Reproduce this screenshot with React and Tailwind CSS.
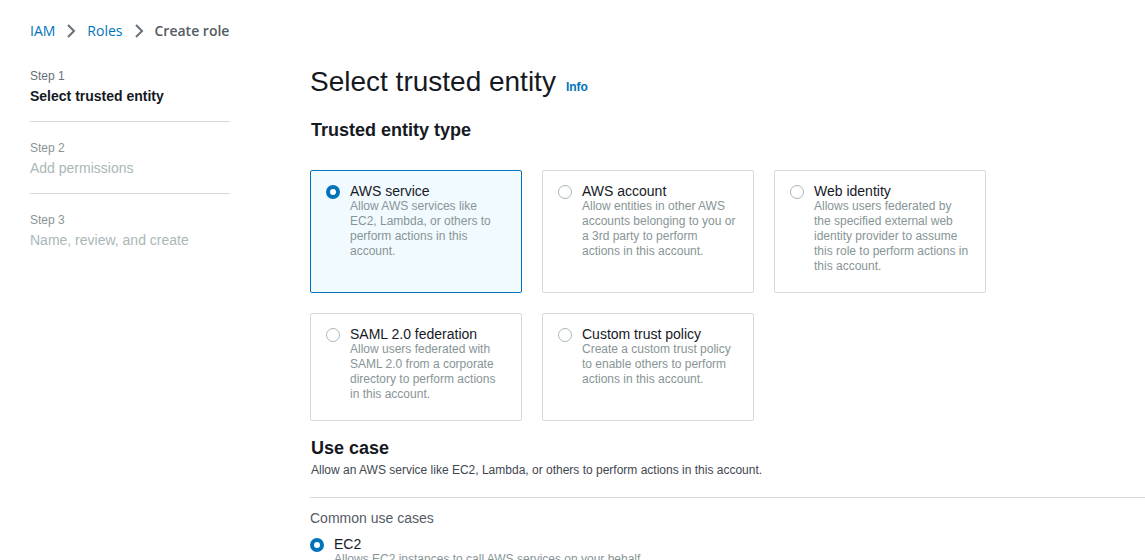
import React from "react";

function Chevron() {
  return (
    <svg width="12" height="16" viewBox="0 0 12 16" className="mx-[10px]">
      <path d="M3 2 L9 8 L3 14" fill="none" stroke="#687078" strokeWidth="2" />
    </svg>
  );
}

function Radio({ checked }) {
  return checked ? (
    <span className="mt-[1px] box-border block h-[14px] w-[14px] shrink-0 rounded-full border-[4px] border-[#0073bb] bg-white" />
  ) : (
    <span className="mt-[1px] box-border block h-[14px] w-[14px] shrink-0 rounded-full border border-[#aab7b8] bg-white" />
  );
}

function Card({ title, desc, selected }) {
  return (
    <div
      className={
        selected
          ? "box-border flex w-[212px] gap-[10px] rounded-[2px] border border-[#0073bb] bg-[#f1faff] pl-[15px] pt-[12px] pb-[18px]"
          : "box-border flex w-[212px] gap-[10px] rounded-[2px] border border-[#d5dbdb] bg-white pl-[15px] pt-[12px] pb-[18px]"
      }
    >
      <div className="pt-[1px]">
        <Radio checked={selected} />
      </div>
      <div className="w-[154.6px]">
        <div className="text-[14px] leading-[16px] text-[#16191f]">{title}</div>
        <div className="text-[12px] leading-[15px] text-[#879596]">{desc}</div>
      </div>
    </div>
  );
}

export default function App() {
  return (
    <div className="min-h-[560px] w-[1145px] overflow-hidden bg-white font-['Liberation_Sans',Arial,sans-serif]">
      <div className="flex items-center pl-[30px] pt-[22px] font-['Open_Sans',sans-serif] text-[14px] leading-[18px]">
        <span className="text-[#0073bb]">IAM</span>
        <Chevron />
        <span className="text-[#0073bb]">Roles</span>
        <Chevron />
        <span className="font-semibold text-[#545b64]">Create role</span>
      </div>
      <div className="flex pt-[25px]">
        <div className="ml-[30px] w-[200px] shrink-0 pt-[3px]">
          <div className="border-b border-[#d5dbdb] pb-[16px]">
            <div className="text-[12px] leading-[16px] text-[#687078]">Step 1</div>
            <div className="pt-[3px] text-[14px] font-bold leading-[18px] text-[#16191f]">Select trusted entity</div>
          </div>
          <div className="border-b border-[#d5dbdb] pt-[18px] pb-[16px]">
            <div className="text-[12px] leading-[16px] text-[#879596]">Step 2</div>
            <div className="pt-[3px] text-[14px] leading-[18px] text-[#aab7b8]">Add permissions</div>
          </div>
          <div className="pt-[18px]">
            <div className="text-[12px] leading-[16px] text-[#879596]">Step 3</div>
            <div className="pt-[3px] text-[14px] leading-[18px] text-[#aab7b8]">Name, review, and create</div>
          </div>
        </div>
        <div className="ml-[80px] flex-1">
          <div className="flex items-baseline gap-[10px]">
            <h1 className="text-[28px] leading-[34px] text-[#16191f]">Select trusted entity</h1>
            <span className="text-[12px] font-bold text-[#0073bb]">Info</span>
          </div>
          <h2 className="pt-[20px] pl-[1px] text-[18px] font-bold leading-[22px] text-[#16191f]">Trusted entity type</h2>
          <div className="grid grid-cols-[212px_212px_212px] gap-[20px] pt-[29px]">
            <Card selected title="AWS service" desc="Allow AWS services like EC2, Lambda, or others to perform actions in this account." />
            <Card title="AWS account" desc="Allow entities in other AWS accounts belonging to you or a 3rd party to perform actions in this account." />
            <Card title="Web identity" desc="Allows users federated by the specified external web identity provider to assume this role to perform actions in this account." />
            <Card title="SAML 2.0 federation" desc="Allow users federated with SAML 2.0 from a corporate directory to perform actions in this account." />
            <Card title="Custom trust policy" desc="Create a custom trust policy to enable others to perform actions in this account." />
          </div>
          <h2 className="pt-[16px] pl-[1px] text-[18px] font-bold leading-[22px] text-[#16191f]">Use case</h2>
          <div className="pt-[3px] pl-[1px] text-[12px] leading-[16px] text-[#414750]">
            Allow an AWS service like EC2, Lambda, or others to perform actions in this account.
          </div>
          <div className="mt-[19px] border-t border-[#d5dbdb]" />
          <div className="pt-[11px] text-[14px] leading-[18px] text-[#545b64]">Common use cases</div>
          <div className="flex gap-[10px] pt-[9px]">
            <div className="pt-[1px]">
              <Radio checked />
            </div>
            <div>
              <div className="text-[14px] leading-[16px] text-[#16191f]">EC2</div>
              <div className="text-[12px] leading-[15px] text-[#879596]">Allows EC2 instances to call AWS services on your behalf.</div>
            </div>
          </div>
        </div>
      </div>
    </div>
  );
}
